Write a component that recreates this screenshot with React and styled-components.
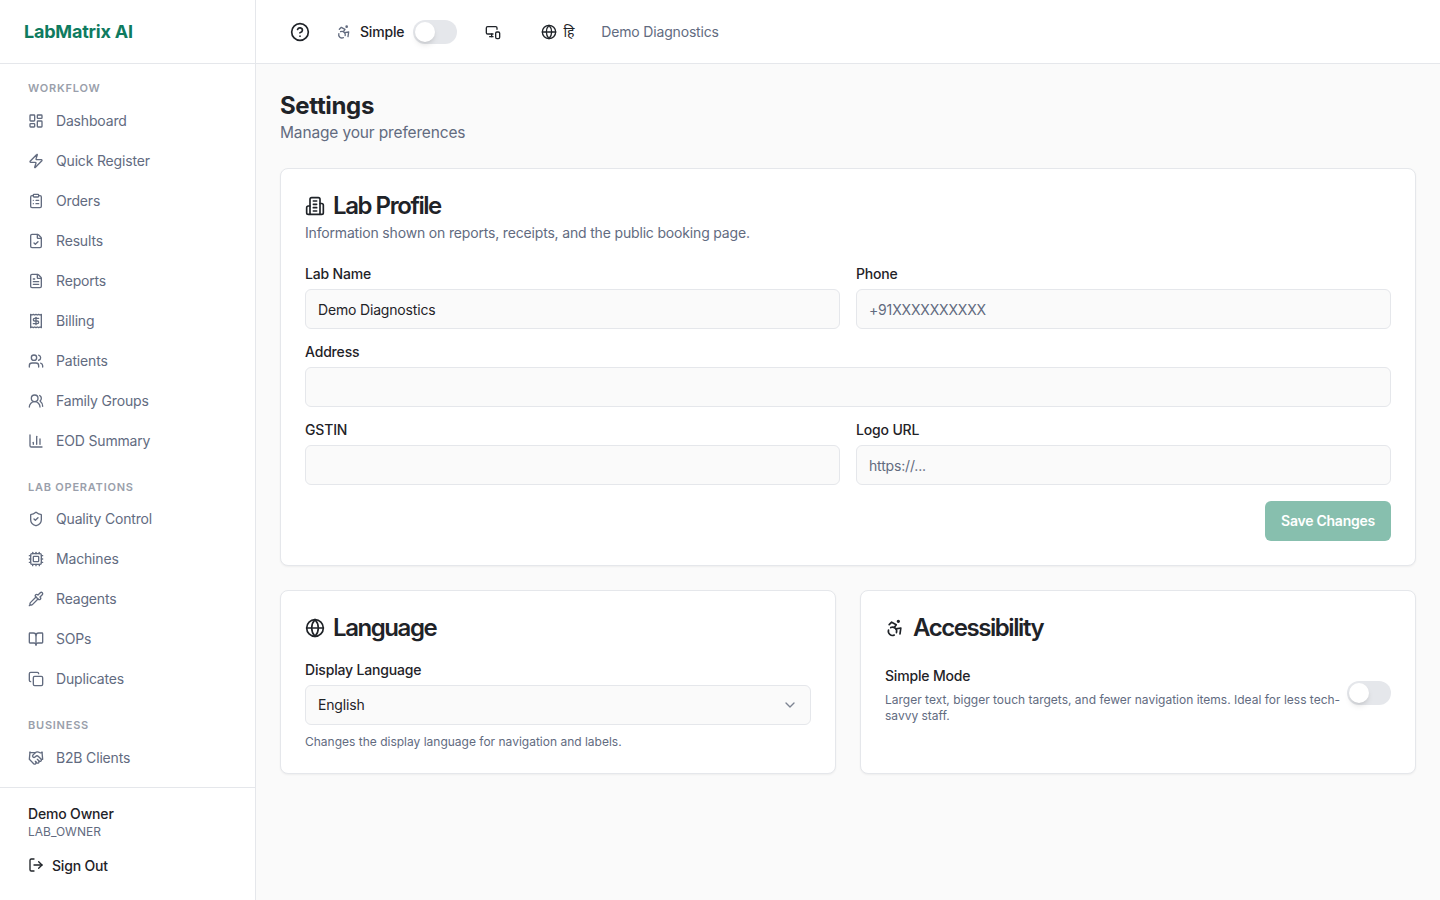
import React from "react";
import styled, { createGlobalStyle } from "styled-components";
import {
  LayoutDashboard, Zap, ClipboardList, FileCheck, FileText, Users, UsersRound, ChartColumn,
  ShieldCheck, Cpu, Pipette, BookOpen, Copy, Handshake, LogOut, CircleHelp, Accessibility,
  MonitorSmartphone, Globe, ChevronDown,
} from "lucide-react";

const Global = createGlobalStyle`
  * { box-sizing: border-box; }
  html, body { margin: 0; padding: 0; height: 100%; }
  body {
    font-family: Inter, "Noto Sans", "Liberation Sans", sans-serif; color: #1f2328; background: #fafafa;
    letter-spacing: -0.17px;
  }
`;

const Shell = styled.div`display: flex; width: 1440px; height: 900px; overflow: hidden;`;
const Sidebar = styled.aside`
  width: 256px; flex: none; display: flex; flex-direction: column;
  background: #fff; border-right: 1px solid #e5e7eb;
`;
const Brand = styled.div`
  height: 64px; flex: none; display: flex; align-items: center; padding: 0 24px;
  border-bottom: 1px solid #e5e7eb; color: #0f7b5f; font-size: 18px; font-weight: 700; letter-spacing: -0.2px;
`;
const Nav = styled.nav`flex: 1; min-height: 0; overflow: hidden; padding: 16px 12px 0;`;
const Group = styled.div`
  & + & { margin-top: 18px; }
  &:last-child { margin-top: 18.5px; }
`;
const GroupLabel = styled.div`
  padding: 0 16px; margin-bottom: ${p => p.$mb}px; font-size: 11px; line-height: 16.5px; font-weight: 600;
  letter-spacing: 0.77px; color: #9a9fab; text-transform: uppercase;
`;
const NavItem = styled.a`
  height: 40px; display: flex; align-items: center; gap: 12px; padding: 0 16px;
  font-size: 14px; font-weight: 400; color: #626b7f;
`;
const Footer = styled.div`
  height: 113px; flex: none; border-top: 1px solid #e5e7eb; padding: 16px 28px;
`;
const UserName = styled.div`font-size: 14px; line-height: 20px; font-weight: 500; color: #1f2328;`;
const UserRole = styled.div`font-size: 12px; line-height: 16px; color: #626b7f; letter-spacing: 0;`;
const SignOut = styled.div`
  display: flex; align-items: center; gap: 8px; margin-top: 15px; height: 20px;
  font-size: 14px; font-weight: 500; color: #1f2328;
`;
const Column = styled.div`flex: 1; min-width: 0; display: flex; flex-direction: column;`;
const TopBar = styled.header`
  height: 64px; flex: none; display: flex; align-items: center; padding: 0 24px 0 34px;
  background: #fff; border-bottom: 1px solid #e5e7eb; font-size: 14px;
`;
const TopIcon = styled.span`display: flex; color: ${p => p.$c || "#1f2328"}; margin-left: ${p => p.$ml || 0}px;`;
const TopText = styled.span`
  margin-left: ${p => p.$ml || 0}px; font-weight: ${p => p.$w || 400}; color: ${p => p.$c || "#1f2328"};
`;
const Track = styled.span`
  position: relative; display: block; flex: none; width: 44px; height: 24px; border-radius: 12px;
  background: #e5e7eb; margin-left: ${p => p.$ml || 0}px; margin-bottom: ${p => p.$mb || 0}px;
`;
const Thumb = styled.span`
  position: absolute; left: 2px; top: 2px; width: 20px; height: 20px; border-radius: 50%;
  background: #fff; box-shadow: 0 4px 6px -1px rgba(0,0,0,.1), 0 2px 4px -2px rgba(0,0,0,.1);
`;
const Main = styled.main`flex: 1; padding: 24px;`;
const PageTitle = styled.h1`
  margin: 3px 0 0; font-size: 24px; line-height: 29px; font-weight: 700; color: #1f2328; letter-spacing: -0.35px;
`;
const PageSub = styled.p`margin: 0 0 23px; font-size: 15.5px; line-height: 25px; color: #626b7f; letter-spacing: -0.15px;`;
const Card = styled.section`
  background: #fff; border: 1px solid #e5e7eb; border-radius: 8px;
  box-shadow: 0 1px 2px rgba(0,0,0,.05); padding: 24px; height: ${p => p.$h}px;
`;
const CardTitle = styled.h2`
  display: flex; align-items: center; gap: 8px; margin: 0; padding-top: ${p => p.$pt}px; font-size: 24px; line-height: 24px;
  font-weight: 600; letter-spacing: -1.44px; color: #1f2328;
`;
const CardDesc = styled.p`margin: 5px 0 0; font-size: 14px; line-height: 20px; color: #626b7f;`;
const FormGrid = styled.div`
  display: grid; grid-template-columns: 1fr 1fr; column-gap: 16px; row-gap: 16px; margin-top: 24px;
`;
const SelectBlock = styled.div`margin-top: 23px;`;
const Field = styled.div`grid-column: ${p => p.$wide ? "1 / -1" : "auto"};`;
const Label = styled.label`display: block; font-size: 14px; line-height: 14px; font-weight: 500; color: #1f2328; margin-bottom: 8px;`;
const Control = styled.div`
  height: 40px; display: flex; align-items: center; justify-content: space-between; padding: 0 12px;
  background: #fafafa; border: 1px solid #e5e7eb; border-radius: 6px; font-size: 14px;
  color: ${p => p.$ph ? "#626b7f" : "#1f2328"};
`;
const SelectControl = styled(Control)`padding-bottom: 1px;`;
const Actions = styled.div`display: flex; justify-content: flex-end; margin-top: 16px;`;
const SaveButton = styled.button`
  height: 40px; width: 126px; border: 0; border-radius: 6px; background: #87bfae; color: #fff;
  padding: 0 0 2px; font: 600 14px Inter, sans-serif; letter-spacing: -0.25px;
`;
const TwoCols = styled.div`display: grid; grid-template-columns: 1fr 1fr; gap: 24px; margin-top: 24px;`;
const Hint = styled.p`margin: ${p => p.$mt || 0}px 0 0; font-size: 12px; line-height: 16px; color: #626b7f; letter-spacing: 0;`;
const SwitchRow = styled.div`display: flex; align-items: center; justify-content: space-between; gap: 6px; margin-top: 29px;`;
const SwitchName = styled.div`font-size: 14px; line-height: 14px; font-weight: 500; color: #1f2328;`;

function BuildingIcon({ size }) {
  return (
    <svg width={size} height={size} viewBox="0 0 24 24" fill="none" stroke="currentColor" strokeWidth="2" strokeLinecap="round" strokeLinejoin="round">
      <path d="M6 22V4a2 2 0 0 1 2-2h8a2 2 0 0 1 2 2v18Z" />
      <path d="M6 12H4a2 2 0 0 0-2 2v6a2 2 0 0 0 2 2h2" />
      <path d="M18 9h2a2 2 0 0 1 2 2v9a2 2 0 0 1-2 2h-2" />
      <path d="M10 6h4M10 10h4M10 14h4M10 18h4" />
    </svg>
  );
}

function BillingIcon({ size }) {
  return (
    <svg width={size} height={size} viewBox="0 0 24 24" fill="none" stroke="currentColor" strokeWidth="2" strokeLinecap="round" strokeLinejoin="round">
      <path d="M4 2v20l2-1 2 1 2-1 2 1 2-1 2 1 2-1 2 1V2l-2 1-2-1-2 1-2-1-2 1-2-1-2 1Z" />
      <path d="M16 8h-6a2 2 0 1 0 0 4h4a2 2 0 1 1 0 4H8" />
      <path d="M12 17.5v-11" />
    </svg>
  );
}

const sections = [
  ["Workflow", 4, [[LayoutDashboard, "Dashboard"], [Zap, "Quick Register"], [ClipboardList, "Orders"], [FileCheck, "Results"], [FileText, "Reports"], [BillingIcon, "Billing"], [Users, "Patients"], [UsersRound, "Family Groups"], [ChartColumn, "EOD Summary"]]],
  ["Lab Operations", 3.5, [[ShieldCheck, "Quality Control"], [Cpu, "Machines"], [Pipette, "Reagents"], [BookOpen, "SOPs"], [Copy, "Duplicates"]]],
  ["Business", 4, [[Handshake, "B2B Clients"]]],
];

export default function App() {
  return (
    <Shell>
      <Global />
      <Sidebar>
        <Brand>LabMatrix AI</Brand>
        <Nav>
          {sections.map(([label, gap, items]) => (
            <Group key={label}>
              <GroupLabel $mb={gap}>{label}</GroupLabel>
              {items.map(([Icon, text]) => (
                <NavItem key={text}><Icon size={16} />{text}</NavItem>
              ))}
            </Group>
          ))}
        </Nav>
        <Footer>
          <UserName>Demo Owner</UserName>
          <UserRole>LAB_OWNER</UserRole>
          <SignOut><LogOut size={16} />Sign Out</SignOut>
        </Footer>
      </Sidebar>
      <Column>
        <TopBar>
          <TopIcon><CircleHelp size={20} /></TopIcon>
          <TopIcon $ml={26} $c="#626b7f"><Accessibility size={16} /></TopIcon>
          <TopText $ml={8} $w={500}>Simple</TopText>
          <Track $ml={9}><Thumb /></Track>
          <TopIcon $ml={28}><MonitorSmartphone size={16} /></TopIcon>
          <TopIcon $ml={40}><Globe size={16} /></TopIcon>
          <TopText $ml={6}>हि</TopText>
          <TopText $ml={27} $c="#626b7f">Demo Diagnostics</TopText>
        </TopBar>
        <Main>
          <PageTitle>Settings</PageTitle>
          <PageSub>Manage your preferences</PageSub>
          <Card $h={398}>
            <CardTitle $pt={1}><BuildingIcon size={20} />Lab Profile</CardTitle>
            <CardDesc>Information shown on reports, receipts, and the public booking page.</CardDesc>
            <FormGrid>
              <Field><Label>Lab Name</Label><Control>Demo Diagnostics</Control></Field>
              <Field><Label>Phone</Label><Control $ph>+91XXXXXXXXXX</Control></Field>
              <Field $wide><Label>Address</Label><Control /></Field>
              <Field><Label>GSTIN</Label><Control /></Field>
              <Field><Label>Logo URL</Label><Control $ph>https://...</Control></Field>
            </FormGrid>
            <Actions><SaveButton>Save Changes</SaveButton></Actions>
          </Card>
          <TwoCols>
            <Card $h={184}>
              <CardTitle $pt={1}><Globe size={20} />Language</CardTitle>
              <SelectBlock>
                <Label>Display Language</Label>
                <SelectControl>English<ChevronDown size={16} color="#7d8492" /></SelectControl>
              </SelectBlock>
              <Hint $mt={9}>Changes the display language for navigation and labels.</Hint>
            </Card>
            <Card $h={184}>
              <CardTitle $pt={1}><Accessibility size={20} />Accessibility</CardTitle>
              <SwitchRow>
                <div>
                  <SwitchName>Simple Mode</SwitchName>
                  <Hint $mt={9}>Larger text, bigger touch targets, and fewer navigation items. Ideal for less tech-savvy staff.</Hint>
                </div>
                <Track $mb={8}><Thumb /></Track>
              </SwitchRow>
            </Card>
          </TwoCols>
        </Main>
      </Column>
    </Shell>
  );
}
